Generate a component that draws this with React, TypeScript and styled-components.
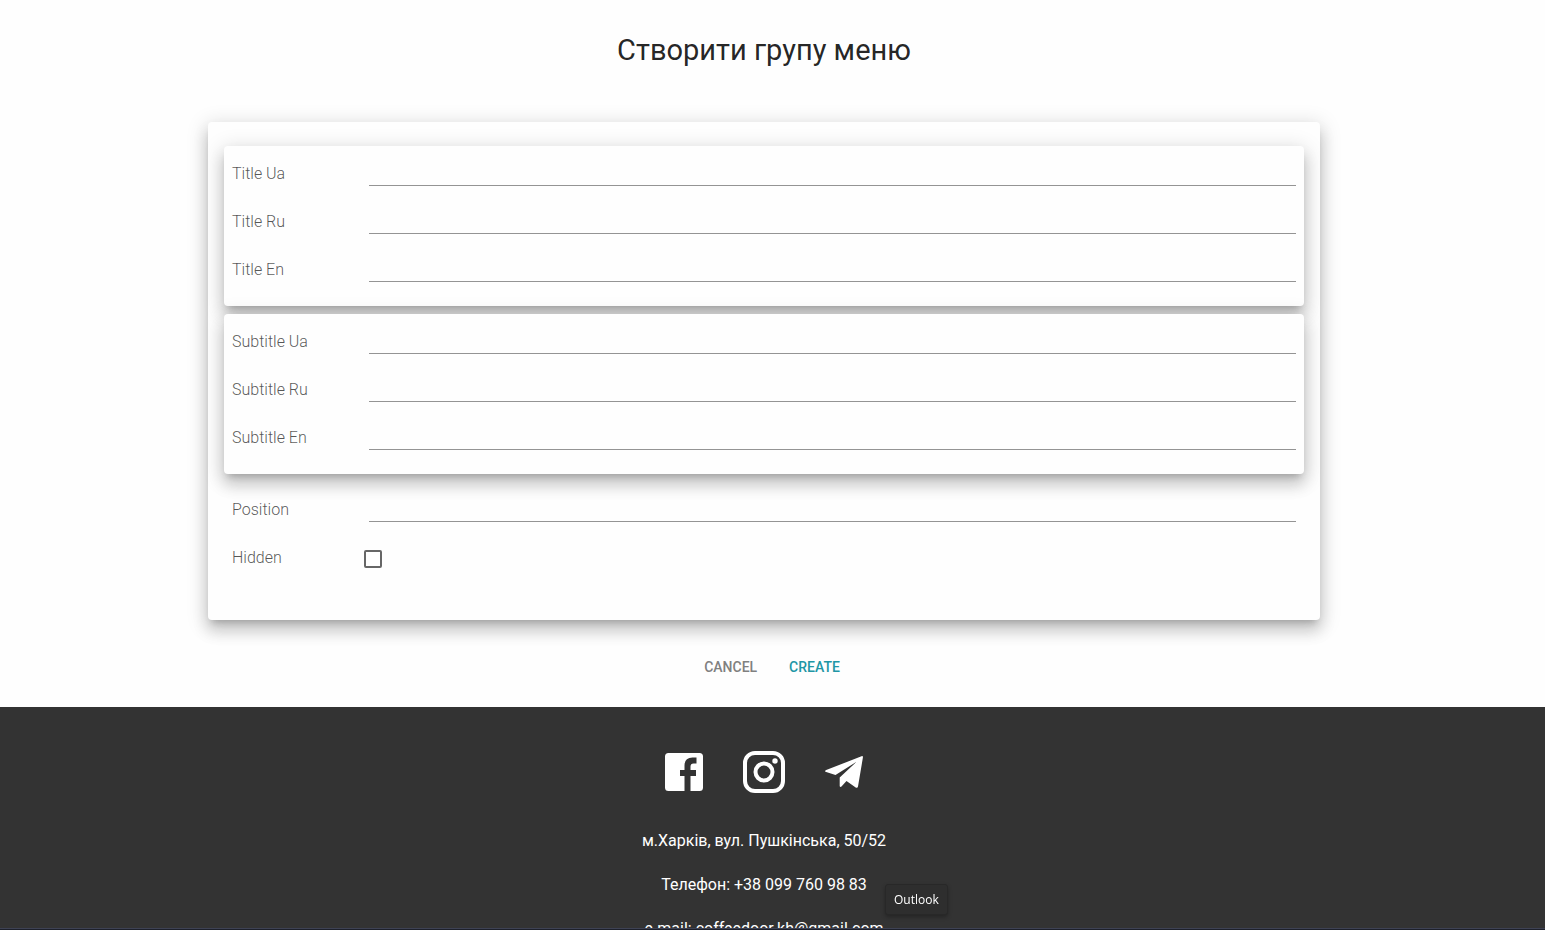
import React from "react";
import styled, { createGlobalStyle } from "styled-components";

const GlobalStyle = createGlobalStyle`
  *, *::before, *::after { box-sizing: border-box; }
  body {
    margin: 0;
    background: #fefefe;
    color: rgba(0, 0, 0, 0.87);
    font-family: Roboto, "Liberation Sans", sans-serif;
    font-size: 16px;
    line-height: 24px;
  }
`;

const Screen = styled.div`
  height: 100vh;
  overflow: hidden;
  display: flex;
  flex-direction: column;
`;

const Main = styled.main`
  flex: none;
  padding: 32px 17px 22px 0;
`;

const Title = styled.h1`
  margin: 0 0 54px;
  text-align: center;
  font-size: 29px;
  line-height: 36px;
  font-weight: 400;
`;

const Surface = styled.div`
  background: #fefefe;
  border-radius: 4px;
  box-shadow: 0 6px 7px -4px rgba(0, 0, 0, 0.2), 0 11px 15px 1px rgba(0, 0, 0, 0.14),
    0 4px 20px 3px rgba(0, 0, 0, 0.13);
`;

const Card = styled(Surface)`
  max-width: 1112px;
  margin: 0 auto;
  padding: 24px 16px 34px;
`;

const Group = styled(Surface)`
  padding: 8px;
  margin-bottom: 8px;
`;

const PlainGroup = styled.div`
  padding: 8px;
  padding-bottom: 0;
`;

const Row = styled.div`
  display: flex;
  align-items: flex-start;
  height: 48px;
`;

const Label = styled.label`
  flex: none;
  width: 137px;
  padding-top: 8px;
  color: rgba(0, 0, 0, 0.68);
  font-weight: 300;
`;

const Input = styled.input`
  flex: 1;
  min-width: 0;
  height: 32px;
  padding: 6px 0 7px;
  border: 0;
  border-bottom: 1px solid #949494;
  background: transparent;
  color: inherit;
  font: inherit;
  outline: none;
`;

const CheckSlot = styled.span`
  display: flex;
  margin-left: -5px;
  padding: 12px 0;
`;

const Checkbox = styled.input`
  appearance: none;
  width: 18px;
  height: 18px;
  margin: 0;
  border: 2px solid #666;
  border-radius: 2px;
  &:checked { background: #2196a5; border-color: #2196a5; }
`;

const Actions = styled.div`
  display: flex;
  justify-content: center;
  gap: 16px;
  padding: 29px 0 0 16px;
`;

const Button = styled.button<{ $primary?: boolean }>`
  height: 36px;
  padding: 6px 8px;
  border: 0;
  background: transparent;
  color: ${(p) => (p.$primary ? "#2196a5" : "#808080")};
  font: 500 14px/24px Roboto, "Liberation Sans", sans-serif;
  text-transform: uppercase;
  cursor: pointer;
`;

const Footer = styled.footer`
  flex: 1 0 auto;
  padding: 41px 17px 0 0;
  background: #333;
  color: #fff;
  text-align: center;
`;

const Social = styled.nav`
  display: flex;
  justify-content: center;
  gap: 32px;
  margin-bottom: 33px;
`;

const SocialLink = styled.a`
  display: flex;
  width: 48px;
  height: 48px;
  color: #fff;
`;

const Contact = styled.p`
  margin: 0 0 20px;
`;

const Tooltip = styled.div`
  position: fixed;
  left: 885px;
  bottom: 15px;
  padding: 4px 8px;
  border: 1px solid #282828;
  border-radius: 3px;
  background: #2e2e2e;
  box-shadow: 0 2px 4px rgba(0, 0, 0, 0.3);
  color: #fff;
  font: 12px/21px "Open Sans", "Noto Sans", sans-serif;
`;

const TaskbarEdge = styled.div`
  position: fixed;
  left: 0;
  right: 0;
  bottom: 0;
  height: 2px;
  border-top: 1px solid #3e4254;
  background: #1d202b;
`;

const Field = ({ id, label }: { id: string; label: string }) => (
  <Row>
    <Label htmlFor={id}>{label}</Label>
    <Input id={id} type="text" />
  </Row>
);

const languages = ["Ua", "Ru", "En"];

export default function App() {
  return (
    <Screen>
      <GlobalStyle />
      <Main>
        <Title>Створити групу меню</Title>
        <form onSubmit={(e) => e.preventDefault()}>
          <Card>
            {["Title", "Subtitle"].map((name) => (
              <Group key={name}>
                {languages.map((lang) => (
                  <Field key={lang} id={`${name}-${lang}`} label={`${name} ${lang}`} />
                ))}
              </Group>
            ))}
            <PlainGroup>
              <Field id="position" label="Position" />
              <Row>
                <Label htmlFor="hidden">Hidden</Label>
                <CheckSlot>
                  <Checkbox id="hidden" type="checkbox" />
                </CheckSlot>
              </Row>
            </PlainGroup>
          </Card>
          <Actions>
            <Button type="button">Cancel</Button>
            <Button type="submit" $primary>
              Create
            </Button>
          </Actions>
        </form>
      </Main>
      <Footer>
        <Social aria-label="Social networks">
          <SocialLink href="#facebook" aria-label="Facebook">
            <svg width="48" height="48" viewBox="0 0 48 48" fill="currentColor">
              <path d="M8.500 5h31q3.500 0 3.500 3.500v31q0 3.500-3.500 3.500H30.500V28H36V22h-5.500v-3.500q0-3 3-3H36.500V9.500H32.500q-8 0-8 8V22H20v6h4.500V43H8.500q-3.500 0-3.500-3.500v-31q0-3.500 3.500-3.500z" />
            </svg>
          </SocialLink>
          <SocialLink href="#instagram" aria-label="Instagram">
            <svg width="48" height="48" viewBox="0 0 48 48" fill="none" stroke="currentColor" strokeWidth="4">
              <rect x="5" y="5" width="38" height="38" rx="10" />
              <circle cx="24" cy="24" r="8.500" />
              <circle cx="35" cy="13" r="2.700" fill="currentColor" stroke="none" />
            </svg>
          </SocialLink>
          <SocialLink href="#telegram" aria-label="Telegram">
            <svg width="48" height="48" viewBox="0 0 48 48" fill="currentColor">
              <path d="M41.500 8.200q1.700-.5 1.400 1.400L38 38.500q-.5 2-2.300.9L26.500 33l-5 5.500q-1.500 1.200-1.800-.6V29.500L36.500 13.800 15.500 27 6.200 24.100q-2.200-.9 0-2z" />
            </svg>
          </SocialLink>
        </Social>
        <Contact>м.Харків, вул. Пушкінська, 50/52</Contact>
        <Contact>Телефон: +38 099 760 98 83</Contact>
        <Contact>e-mail: coffeedoor.kh@gmail.com</Contact>
      </Footer>
      <Tooltip role="tooltip">Outlook</Tooltip>
      <TaskbarEdge />
    </Screen>
  );
}
